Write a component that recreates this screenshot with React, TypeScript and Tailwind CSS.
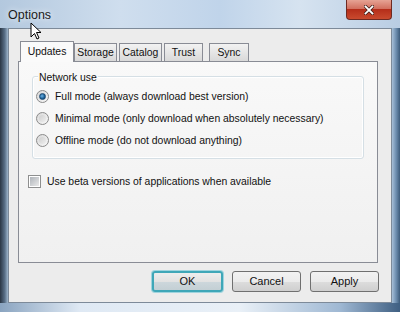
import React from "react";

const font = { fontFamily: '"Liberation Sans", Arial, sans-serif' };

function Radio({ checked }: { checked?: boolean }) {
  return (
    <span className="relative flex h-[13px] w-[13px] shrink-0 items-center justify-center rounded-full border border-[#8a8a8a] bg-gradient-to-br from-[#d8d8d8] to-[#f8f8f8]">
      {checked ? (
        <span className="h-[7px] w-[7px] rounded-full border border-[#1e4a72] bg-[radial-gradient(circle_at_40%_40%,#6fb3e6,#1a5f95_60%,#0d3357)]" />
      ) : (
        <span className="h-[7px] w-[7px] rounded-full bg-gradient-to-br from-[#cfcfcf] to-[#eeeeee]" />
      )}
    </span>
  );
}

function Tab({ label, active, w }: { label: string; active?: boolean; w: string }) {
  return (
    <div
      className={
        (active
          ? "relative z-10 -mr-[2px] -ml-[2px] mb-[-1px] flex h-[21px] items-center justify-center border border-b-0 border-[#898c95] bg-[#fafafa] text-[10.4px] text-[#111] "
          : "flex h-[18px] items-center justify-center border border-b-0 border-[#898c95] bg-gradient-to-b from-[#f2f2f2] to-[#d9d9d9] text-[10.4px] text-[#111] ") + w
      }
    >
      {label}
    </div>
  );
}

function Button({ label, def }: { label: string; def?: boolean }) {
  return (
    <div
      className={
        def
          ? "flex h-[21px] w-[71px] items-center justify-center rounded-[3px] border-2 border-[#3fa7b8] bg-[linear-gradient(#ededed_0%,#e2e2e2_50%,#cdd7dc_51%,#c3cfd4_100%)] text-[11px] text-[#111] shadow-[0_0_0_1px_#9fd4de]"
          : "flex h-[21px] w-[69px] items-center justify-center rounded-[3px] border border-[#707070] bg-[linear-gradient(#f2f2f2_0%,#ebebeb_50%,#dddddd_51%,#cfcfcf_100%)] text-[11px] text-[#111]"
      }
    >
      {label}
    </div>
  );
}

export default function App() {
  return (
    <div
      className="relative flex h-[312px] w-[400px] flex-col overflow-hidden bg-[linear-gradient(90deg,#b3c8de,#cfdeee_30%,#c0d4ea_55%,#d6e3f0_75%,#b9cde3)]"
      style={font}
    >
      {/* title bar */}
      <div className="flex h-[28px] shrink-0 items-start">
        <div className="pl-[8px] pt-[6px] text-[12.5px] text-[#1b1b1b] [text-shadow:0_0_6px_#ffffff]">Options</div>
        <div className="flex-1" />
        <div className="mr-[8px] flex h-[20px] w-[46px] items-center justify-center rounded-b-[4px] border border-t-0 border-[#6e2a22] bg-[linear-gradient(#e6a394_0%,#d2705f_45%,#b52e1a_50%,#c94a2e_100%)]">
          <svg width="10" height="10" viewBox="0 0 10 10">
            <path d="M1.5 1.5 L8.5 8.5 M8.5 1.5 L1.5 8.5" stroke="#3a1a14" strokeWidth="3.2" strokeLinecap="square" />
            <path d="M1.5 1.5 L8.5 8.5 M8.5 1.5 L1.5 8.5" stroke="#ffffff" strokeWidth="1.8" strokeLinecap="square" />
          </svg>
        </div>
      </div>

      {/* body */}
      <div className="flex flex-1">
        <div className="w-[8px] bg-[linear-gradient(90deg,#2a3644,#5a7088_60%,#9fb6cc)]" />
        <div className="flex flex-1 flex-col border border-[#7d8a99] bg-[#ececec]">
          {/* tabs */}
          <div className="ml-[13px] mt-[12px] flex items-end gap-[2px]">
            <Tab label="Updates" active w="w-[54px]" />
            <Tab label="Storage" w="w-[43px]" />
            <Tab label="Catalog" w="w-[43px]" />
            <Tab label="Trust" w="w-[39px]" />
            <div className="w-[2px]" />
            <Tab label="Sync" w="w-[40px]" />
          </div>
          {/* panel */}
          <div className="ml-[9px] mr-[13px] flex h-[202px] flex-col border border-[#898c95] bg-[linear-gradient(#f9f9f9,#f0f0f0)] px-[13px] pt-[8px]">
            {/* group box */}
            <div className="relative mt-[6px] flex h-[83px] flex-col gap-[9px] rounded-[3px] border border-[#d5dfe5] px-[3px] pt-[13px] shadow-[inset_0_0_0_1px_#ffffff]">
              <div className="absolute -top-[7px] left-[5px] bg-[#f7f7f7] px-[1px] text-[10.4px] text-[#111]">Network use</div>
              <div className="flex h-[13px] items-center gap-[6px] text-[10.4px] text-[#111]">
                <Radio checked />
                <span>Full mode (always download best version)</span>
              </div>
              <div className="flex h-[13px] items-center gap-[6px] text-[10.4px] text-[#111]">
                <Radio />
                <span>Minimal mode (only download when absolutely necessary)</span>
              </div>
              <div className="flex h-[13px] items-center gap-[6px] text-[10.4px] text-[#111]">
                <Radio />
                <span>Offline mode (do not download anything)</span>
              </div>
            </div>
            <div className="ml-[-4px] mt-[15px] flex items-center gap-[6px] text-[10.4px] text-[#111]">
              <span className="flex h-[13px] w-[13px] items-center justify-center border border-[#8e8f8f] bg-white">
                <span className="h-[9px] w-[9px] bg-gradient-to-br from-[#aeb3b9] to-[#eaeaea]" />
              </span>
              <span>Use beta versions of applications when available</span>
            </div>
          </div>
          {/* buttons */}
          <div className="mr-[12px] mt-[8px] flex justify-end gap-[9px]">
            <Button label="OK" def />
            <Button label="Cancel" />
            <Button label="Apply" />
          </div>
        </div>
        <div className="w-[8px] bg-[linear-gradient(90deg,#a7bfd7,#6f8fb0_50%,#3d5b7a)]" />
      </div>
      {/* bottom frame */}
      <div className="h-[9px] shrink-0 bg-[linear-gradient(90deg,#8aa4c0,#dfe9f4_20%,#e9f0f7_60%,#9fb8d3_85%,#3f5f82)]" />

      {/* mouse cursor */}
      <svg className="absolute left-[30px] top-[22px]" width="12" height="19" viewBox="0 0 12 19">
        <path d="M1 1 L1 15 L4.5 11.5 L7 17 L9 16 L6.5 10.5 L11 10.5 Z" fill="#ffffff" stroke="#000000" strokeWidth="1" strokeLinejoin="round" />
      </svg>
    </div>
  );
}
